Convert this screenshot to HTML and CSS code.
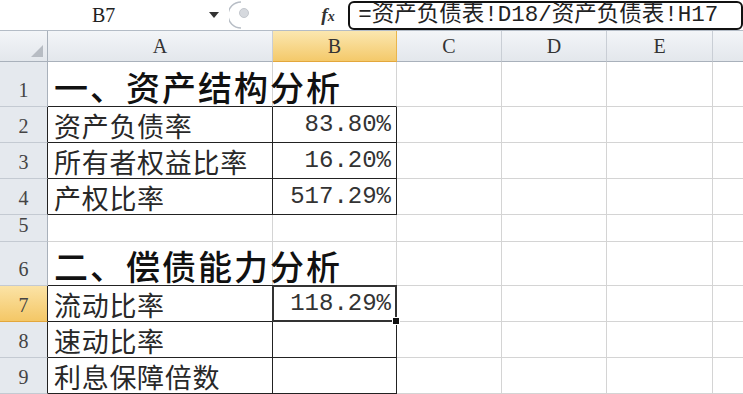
FILE: index.html
```html
<!DOCTYPE html>
<html lang="zh-CN">
<head>
<meta charset="utf-8">
<title>Sheet</title>
<link rel="stylesheet" href="styles.css">
</head>
<body>
<div class="app">
  <div class="fbar">
    <div class="namebox">B7</div>
    <div class="nb-arrow"><svg width="10" height="6" viewBox="0 0 10 6"><path d="M0 0H10L5 6Z" fill="#333"/></svg></div>
    <div class="handle"><svg width="24" height="28" viewBox="0 0 24 28"><path d="M12 1 A13 13 0 0 0 12 27" fill="none" stroke="#b8bec6" stroke-width="1.5"/><circle cx="15" cy="12" r="4.5" fill="#d6d9de" stroke="#c3c7cd"/></svg></div>
    <div class="fx"><i>f</i><span>x</span></div>
    <div class="formula">=资产负债表!D18/资产负债表!H17</div>
  </div>
  <div class="sheet">
    <div class="ch corner"><svg width="12" height="12" viewBox="0 0 12 12"><path d="M12 0V12H0Z" fill="#b7bcc3"/></svg></div>
    <div class="ch">A</div>
    <div class="ch sel">B</div>
    <div class="ch">C</div>
    <div class="ch">D</div>
    <div class="ch">E</div>
    <div class="ch last"></div>

    <div class="rh">1</div>
    <div class="c title bb">一、资产结构分析</div>
    <div class="c bb"></div>
    <div class="c"></div><div class="c"></div><div class="c"></div><div class="c last"></div>

    <div class="rh tl">2</div>
    <div class="c t">资产负债率</div>
    <div class="c t num">83.80%</div>
    <div class="c"></div><div class="c"></div><div class="c"></div><div class="c last"></div>

    <div class="rh tl">3</div>
    <div class="c t">所有者权益比率</div>
    <div class="c t num">16.20%</div>
    <div class="c"></div><div class="c"></div><div class="c"></div><div class="c last"></div>

    <div class="rh tl">4</div>
    <div class="c t">产权比率</div>
    <div class="c t num">517.29%</div>
    <div class="c"></div><div class="c"></div><div class="c"></div><div class="c last"></div>

    <div class="rh">5</div>
    <div class="c"></div><div class="c"></div>
    <div class="c"></div><div class="c"></div><div class="c"></div><div class="c last"></div>

    <div class="rh">6</div>
    <div class="c title bb">二、偿债能力分析</div>
    <div class="c bb"></div>
    <div class="c"></div><div class="c"></div><div class="c"></div><div class="c last"></div>

    <div class="rh tl sel">7</div>
    <div class="c t">流动比率</div>
    <div class="c t num active">118.29%<span class="handle-sq"></span></div>
    <div class="c"></div><div class="c"></div><div class="c"></div><div class="c last"></div>

    <div class="rh tl">8</div>
    <div class="c t">速动比率</div>
    <div class="c t num"></div>
    <div class="c"></div><div class="c"></div><div class="c"></div><div class="c last"></div>

    <div class="rh tl">9</div>
    <div class="c t">利息保障倍数</div>
    <div class="c t num"></div>
    <div class="c"></div><div class="c"></div><div class="c"></div><div class="c last"></div>
  </div>
</div>
</body>
</html>
```

FILE: styles.css
```css
html, body {
  margin: 0;
  padding: 0;
  background: #fff;
}
.app {
  width: 743px;
  height: 394px;
  overflow: hidden;
  font-family: "Noto Sans CJK SC", sans-serif;
  color: #222;
}
.fbar {
  display: flex;
  align-items: center;
  height: 30px;
  border-bottom: 1px solid #b4bcc6;
  background: #fff;
}
.namebox {
  width: 208px;
  text-align: center;
  font-family: "Liberation Serif", serif;
  font-size: 20px;
  color: #222;
}
.nb-arrow {
  width: 14px;
  display: flex;
  justify-content: center;
}
.handle {
  margin-left: 8px;
  width: 24px;
  height: 28px;
}
.fx {
  margin-left: 68px;
  width: 24px;
  font-family: "Liberation Serif", serif;
  font-size: 19px;
  font-weight: bold;
  color: #333;
}
.fx i { font-style: italic; }
.fx span { font-size: 14px; font-style: italic; }
.formula {
  margin-left: 3px;
  width: 384px;
  height: 25px;
  border: 2px solid #111;
  border-radius: 6px;
  padding-left: 8px;
  font-size: 22.5px;
  line-height: 25px;
  font-family: "Liberation Mono", "Noto Sans CJK SC", monospace;
  white-space: nowrap;
  color: #222;
}
.sheet {
  display: grid;
  grid-template-columns: 48px 225px 124px 105px 105px 106px 30px;
  grid-template-rows: 31px 45px 36px 36px 36px 27px 44px 36px 36px 36px;
}
.ch {
  background: linear-gradient(#f3f5f8, #e3e7ec);
  border-right: 1px solid #c9ced5;
  border-bottom: 1px solid #a9b1bb;
  display: flex;
  align-items: center;
  justify-content: center;
  font-family: "Liberation Serif", serif;
  font-size: 20px;
  color: #333;
}
.ch.corner {
  justify-content: flex-end;
  align-items: flex-end;
  padding: 0 4px 4px 0;
  box-sizing: border-box;
  border-right-color: #a9b1bb;
}
.ch.sel {
  background: linear-gradient(#fbe7b0, #f4c96a);
  border-right-color: #e9b54c;
  border-bottom-color: #e3a73c;
}
.rh {
  background: #e5e9ee;
  border-right: 1px solid #a9b1bb;
  border-bottom: 1px solid #c4cad2;
  display: flex;
  align-items: flex-end;
  justify-content: center;
  padding-bottom: 4px;
  box-sizing: border-box;
  font-family: "Liberation Serif", serif;
  font-size: 20px;
  color: #444;
}
.rh.tl { border-right-color: #222; }
.rh.sel {
  background: linear-gradient(#fbe3a6, #f4c766);
  border-bottom-color: #e3a73c;
}
.c {
  border-right: 1px solid #d4d4d4;
  border-bottom: 1px solid #d4d4d4;
  display: flex;
  align-items: flex-end;
  padding: 0 4px 3px 6px;
  box-sizing: border-box;
  font-size: 27px;
  letter-spacing: 0.7px;
  line-height: 1;
  white-space: nowrap;
  color: #282828;
}
.c.title {
  font-size: 34px;
  letter-spacing: 2px;
  font-weight: 500;
  padding-bottom: 2px;
  overflow: visible;
  color: #111;
}
.c.bb { border-bottom-color: #222; }
.c.t {
  border-right-color: #222;
  border-bottom-color: #222;
}
.c.num {
  justify-content: flex-end;
  font-family: "Liberation Mono", monospace;
  font-size: 24px;
  letter-spacing: 0;
  padding-bottom: 5px;
  padding-right: 5px;
  color: #333;
}
.c.active {
  position: relative;
}
.c.active::after {
  content: "";
  position: absolute;
  left: -1px;
  top: -1px;
  right: -1px;
  bottom: -1px;
  border: 2px solid #333;
}
.handle-sq {
  position: absolute;
  right: -4px;
  bottom: -4px;
  width: 6px;
  height: 6px;
  background: #111;
  border: 1px solid #fff;
  z-index: 2;
}
.last { border-right: none; }
```
